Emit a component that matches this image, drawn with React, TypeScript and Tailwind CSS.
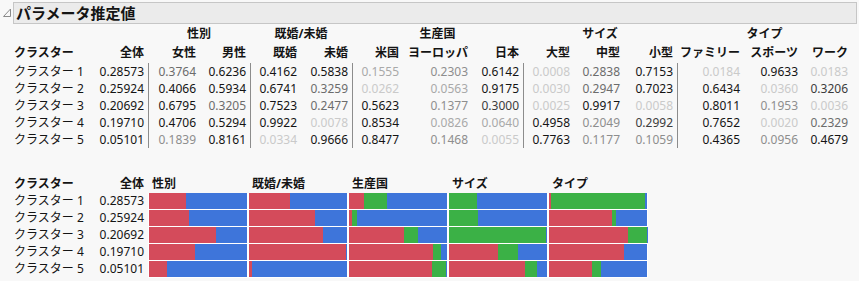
const shade: Record<string, string> = {
  a: 'text-[#141414]',
  b: 'text-[#3c3c3c]',
  c: 'text-[#6c6c6c]',
  d: 'text-[#8e8e8e]',
  e: 'text-[#a9a9a9]',
  f: 'text-[#cacaca]',
};

const barColor: Record<string, string> = {
  r: 'bg-[#d44b5b]',
  g: 'bg-[#3bb146]',
  b: 'bg-[#3e75da]',
};

const groups = [
  { name: '性別', w: 'w-[102px]', cols: [{ h: '女性', w: 'w-[52px]' }, { h: '男性', w: 'w-[50px]' }], bars: ['r', 'b'] },
  { name: '既婚/未婚', w: 'w-[102px]', cols: [{ h: '既婚', w: 'w-[51px]' }, { h: '未婚', w: 'w-[51px]' }], bars: ['r', 'b'] },
  {
    name: '生産国',
    w: 'w-[171px]',
    cols: [{ h: '米国', w: 'w-[51px]' }, { h: 'ヨーロッパ', w: 'w-[69px]' }, { h: '日本', w: 'w-[51px]' }],
    bars: ['r', 'g', 'b'],
  },
  {
    name: 'サイズ',
    w: 'w-[154px]',
    cols: [{ h: '大型', w: 'w-[51px]' }, { h: '中型', w: 'w-[50px]' }, { h: '小型', w: 'w-[53px]' }],
    bars: ['r', 'g', 'b'],
  },
  {
    name: 'タイプ',
    w: 'w-[175px]',
    cols: [{ h: 'ファミリー', w: 'w-[67px]' }, { h: 'スポーツ', w: 'w-[58px]' }, { h: 'ワーク', w: 'w-[50px]' }],
    bars: ['r', 'g', 'b'],
  },
];

// values per cluster, grouped like `groups`, each "value:shade"
const clusters = [
  {
    name: 'クラスター 1',
    total: '0.28573',
    vals: [['0.3764:c', '0.6236:a'], ['0.4162:a', '0.5838:a'], ['0.1555:e', '0.2303:d', '0.6142:a'], ['0.0008:f', '0.2838:c', '0.7153:a'], ['0.0184:f', '0.9633:a', '0.0183:f']],
  },
  {
    name: 'クラスター 2',
    total: '0.25924',
    vals: [['0.4066:a', '0.5934:a'], ['0.6741:a', '0.3259:c'], ['0.0262:f', '0.0563:e', '0.9175:a'], ['0.0030:f', '0.2947:c', '0.7023:a'], ['0.6434:a', '0.0360:f', '0.3206:b']],
  },
  {
    name: 'クラスター 3',
    total: '0.20692',
    vals: [['0.6795:a', '0.3205:c'], ['0.7523:a', '0.2477:c'], ['0.5623:a', '0.1377:d', '0.3000:b'], ['0.0025:f', '0.9917:a', '0.0058:f'], ['0.8011:a', '0.1953:d', '0.0036:f']],
  },
  {
    name: 'クラスター 4',
    total: '0.19710',
    vals: [['0.4706:a', '0.5294:a'], ['0.9922:a', '0.0078:f'], ['0.8534:a', '0.0826:e', '0.0640:e'], ['0.4958:a', '0.2049:d', '0.2992:b'], ['0.7652:a', '0.0020:f', '0.2329:c']],
  },
  {
    name: 'クラスター 5',
    total: '0.05101',
    vals: [['0.1839:d', '0.8161:a'], ['0.0334:f', '0.9666:a'], ['0.8477:a', '0.1468:d', '0.0055:f'], ['0.7763:a', '0.1177:d', '0.1059:d'], ['0.4365:a', '0.0956:d', '0.4679:a']],
  },
];

function Disclosure() {
  return (
    <svg width="9" height="10" viewBox="0 0 9 10" className="mt-[6px] mr-px shrink-0">
      <path d="M7.5 1 L7.5 8.5 L0.5 8.5 Z" fill="none" stroke="#8a8a8a" strokeWidth="1" />
    </svg>
  );
}

export default function App() {
  return (
    <div
      className="w-[859px] h-[281px] bg-[#f8f8f8] text-[12px] text-[#141414] overflow-hidden"
      style={{ fontFamily: '"Noto Sans", "Noto Sans CJK JP", sans-serif' }}
    >
      {/* title bar */}
      <div className="flex pl-[3px] pt-[2px]">
        <Disclosure />
        <div className="w-[844px] h-[22px] bg-[#ebebeb] border border-[#c6c6c6] pl-[2px] flex items-center">
          <span className="text-[15px] font-bold leading-none">パラメータ推定値</span>
        </div>
      </div>

      {/* estimates table */}
      <div className="pl-[14px]">
        <div className="flex h-[19px] items-center font-bold">
          <div className="w-[134px]" />
          {groups.map((g) => (
            <div key={g.name} className={`${g.w} text-center`}>
              {g.name}
            </div>
          ))}
        </div>
        <div className="flex h-[20px] items-center font-bold">
          <div className="w-[76px]">クラスター</div>
          <div className="w-[58px] text-right pr-[4px]">全体</div>
          {groups.map((g) =>
            g.cols.map((c) => (
              <div key={c.h} className={`${c.w} text-right pr-[4px]`}>
                {c.h}
              </div>
            ))
          )}
        </div>
        {clusters.map((cl) => (
          <div key={cl.name} className="flex h-[17px] items-center">
            <div className="w-[76px]">{cl.name}</div>
            <div className="w-[58px] text-right pr-[4px]">{cl.total}</div>
            {groups.map((g, gi) =>
              g.cols.map((c, ci) => {
                const [v, s] = cl.vals[gi][ci].split(':');
                return (
                  <div
                    key={c.h}
                    className={`${c.w} h-full flex items-center justify-end pr-[4px] ${shade[s]} ${
                      ci === 0 ? 'border-l border-[#8c8c8c]' : ''
                    }`}
                  >
                    {v}
                  </div>
                );
              })
            )}
          </div>
        ))}
      </div>

      {/* bar chart */}
      <div className="pl-[14px] mt-[26px]">
        <div className="flex h-[19px] items-center font-bold">
          <div className="w-[76px]">クラスター</div>
          <div className="w-[58px] text-right pr-[4px]">全体</div>
          {groups.map((g) => (
            <div key={g.name} className="w-[100px] pl-[4px]">
              {g.name}
            </div>
          ))}
        </div>
        {clusters.map((cl) => (
          <div key={cl.name} className="flex h-[17px]">
            <div className="w-[76px] h-[16px] flex items-center">{cl.name}</div>
            <div className="w-[58px] h-[16px] flex items-center justify-end pr-[4px]">{cl.total}</div>
            {groups.map((g, gi) => (
              <div key={g.name} className="w-[100px] h-[17px] bg-white px-px pb-px">
                <div className="flex h-[16px] w-full">
                  {cl.vals[gi].map((cell, ci) => {
                    const v = parseFloat(cell.split(':')[0]);
                    return <div key={ci} className={`h-full ${barColor[g.bars[ci]]}`} style={{ width: `${v * 100}%` }} />;
                  })}
                </div>
              </div>
            ))}
          </div>
        ))}
      </div>
    </div>
  );
}
